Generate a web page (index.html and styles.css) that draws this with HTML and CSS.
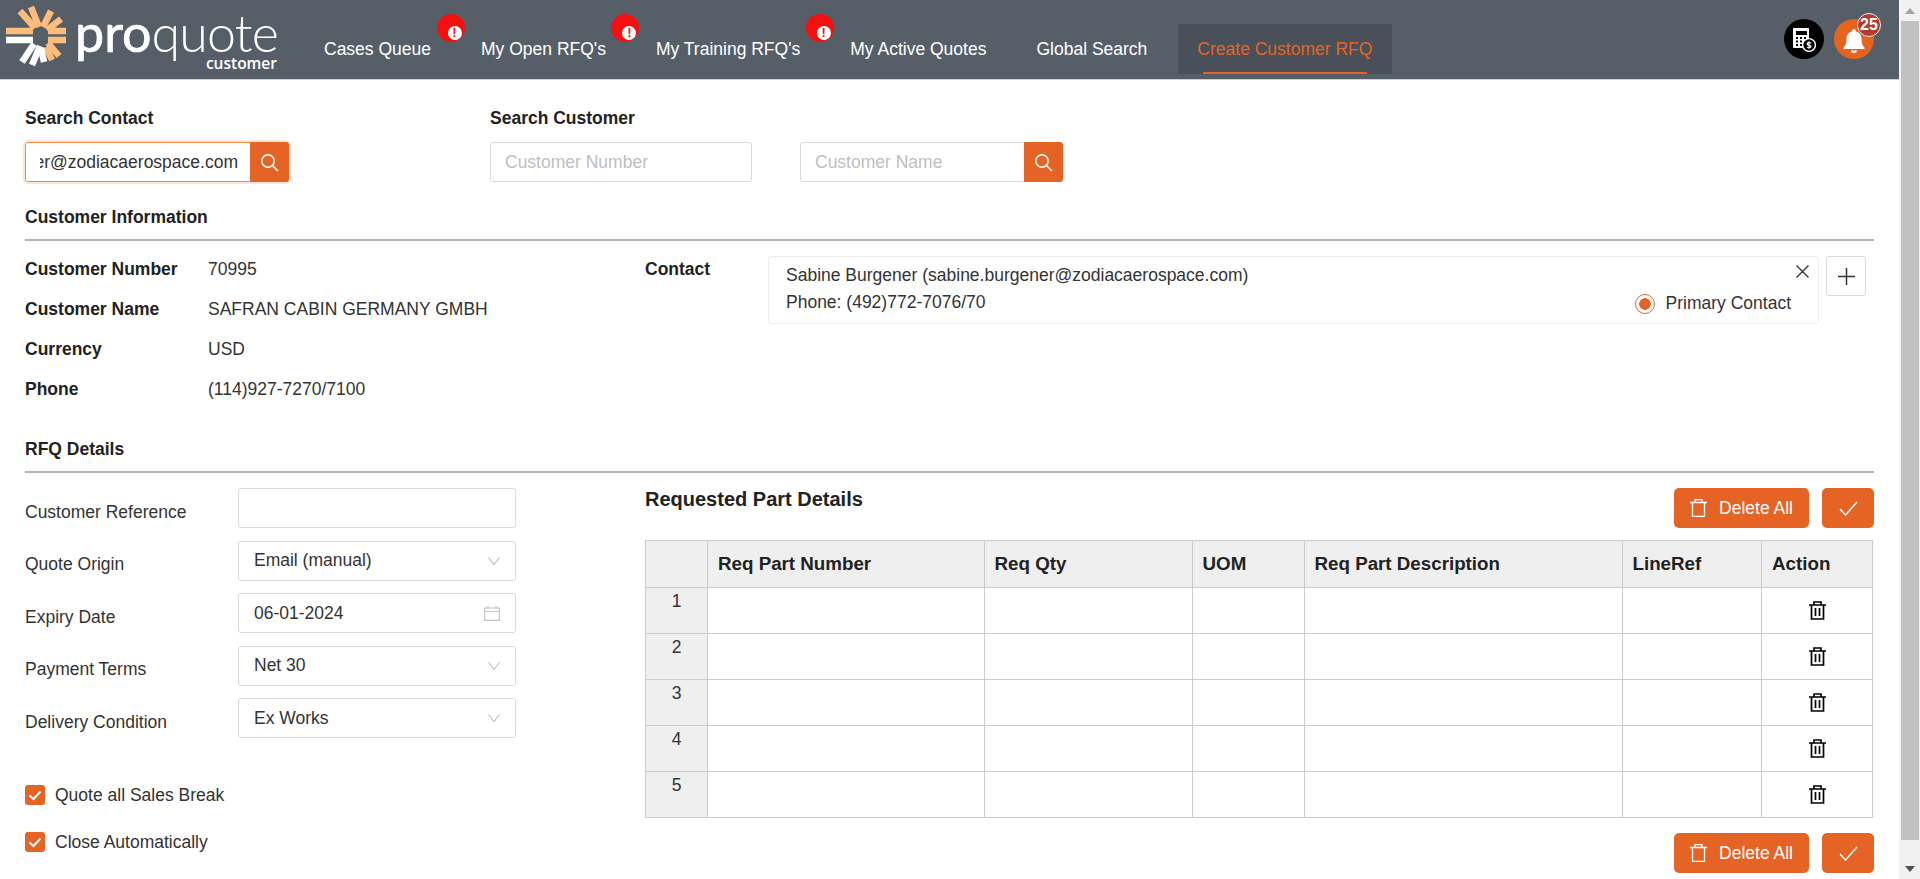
FILE: index.html
```html
<!DOCTYPE html>
<html lang="en">
<head>
    <meta charset="UTF-8">
    <title>Create Customer RFQ</title>
    <link rel="stylesheet" href="styles.css">
</head>
<body>
<div class="app">
    <div class="page">
        <header class="topbar">
            <div class="logo">
                <svg class="logo-mark" width="72" height="72" viewBox="0 0 72 72" fill="none" stroke-width="6.5">
                    <g stroke="#ffbd7c">
                        <path d="M6 31H33"/>
                        <path d="M48 31H66"/>
                        <path d="M48 40H66"/>
                        <path d="M20 11L35 28"/>
                        <path d="M31 7L39 27"/>
                        <path d="M51 11L43 27"/>
                        <path d="M61 19L47 30"/>
                        <path d="M59 56L48 43"/>
                        <path d="M52 60L46 47"/>
                    </g>
                    <g stroke="#ffffff">
                        <path d="M6 40H33"/>
                        <path d="M22 62L34 44"/>
                        <path d="M32 65L40 46"/>
                        <path d="M44 62L41 48"/>
                    </g>
                </svg>
                <div class="logo-text">
                    <div class="logo-word"><span class="logo-pro">pro</span><span class="logo-quote">quote</span></div>
                    <div class="logo-sub">customer</div>
                </div>
            </div>
            <nav class="nav">
                <a class="nav-item">Cases Queue<span class="alert"><span class="alert-dot">!</span></span></a>
                <a class="nav-item">My Open RFQ's<span class="alert"><span class="alert-dot">!</span></span></a>
                <a class="nav-item">My Training RFQ's<span class="alert"><span class="alert-dot">!</span></span></a>
                <a class="nav-item">My Active Quotes</a>
                <a class="nav-item">Global Search</a>
                <a class="nav-item active">Create Customer RFQ</a>
            </nav>
            <div class="top-icons">
                <div class="round-btn calc">
                    <svg width="24" height="24" viewBox="0 0 24 24">
                        <path fill="#fff" d="M2 0H16a1 1 0 0 1 1 1V20H2a1 1 0 0 1-1-1V1a1 1 0 0 1 1-1Z"/>
                        <rect x="4" y="3" width="11" height="4" fill="#000"/>
                        <g fill="#000">
                            <rect x="4" y="9" width="2" height="2"/><rect x="8" y="9" width="2" height="2"/><rect x="12" y="9" width="2" height="2"/>
                            <rect x="4" y="12.5" width="2" height="2"/><rect x="8" y="12.5" width="2" height="2"/>
                            <rect x="4" y="16" width="2" height="2"/><rect x="8" y="16" width="2" height="2"/>
                        </g>
                        <circle cx="17" cy="17" r="6.4" fill="#000" stroke="#fff" stroke-width="1.4"/>
                        <path fill="none" stroke="#fff" stroke-width="1.2" d="M19 15.2c-.6-.8-3.8-1-3.9.7 0 1.800 3.900 1 3.900 2.600 0 1.600-3.200 1.500-4 .5M17 13.300V20.700"/>
                    </svg>
                </div>
                <div class="round-btn bell">
                    <svg width="22" height="24" viewBox="0 0 22 24">
                        <path fill="#fff" d="M11 0a2 2 0 0 1 2 2v.6c3.700.8 5.500 3.800 5.500 7.400 0 4.500 1 6.500 3 8.500v1.500H.5v-1.500c2-2 3-4 3-8.500 0-3.600 1.800-6.600 5.500-7.400V2a2 2 0 0 1 2-2Z"/>
                        <path fill="#fff" d="M8 21.500h6a3 2.500 0 0 1-6 0Z"/>
                    </svg>
                    <span class="count">25</span>
                </div>
            </div>
        </header>

        <main class="content">
            <div class="search-row">
                <div class="search-contact">
                    <div class="field-title">Search Contact</div>
                    <div class="input-group focused">
                        <div class="scrolled-value"><span>sabine.burgener@zodiacaerospace.com</span></div>
                        <button class="search-btn">
                            <svg width="19" height="19" viewBox="0 0 19 19" fill="none" stroke="#fff" stroke-width="1.500"><circle cx="8" cy="8" r="6.200"/><path d="M12.500 12.500L18 18"/></svg>
                        </button>
                    </div>
                </div>
                <div class="search-customer">
                    <div class="field-title">Search Customer</div>
                    <div class="search-customer-inputs">
                        <input class="text-input number-input" type="text" placeholder="Customer Number">
                        <div class="input-group name-group">
                            <input class="bare-input" type="text" placeholder="Customer Name">
                            <button class="search-btn">
                                <svg width="19" height="19" viewBox="0 0 19 19" fill="none" stroke="#fff" stroke-width="1.500"><circle cx="8" cy="8" r="6.200"/><path d="M12.500 12.500L18 18"/></svg>
                            </button>
                        </div>
                    </div>
                </div>
            </div>

            <h2 class="section-title first">Customer Information</h2>
            <div class="info">
                <div class="info-list">
                    <div class="info-row"><span class="info-label">Customer Number</span><span>70995</span></div>
                    <div class="info-row"><span class="info-label">Customer Name</span><span>SAFRAN CABIN GERMANY GMBH</span></div>
                    <div class="info-row"><span class="info-label">Currency</span><span>USD</span></div>
                    <div class="info-row"><span class="info-label">Phone</span><span>(114)927-7270/7100</span></div>
                </div>
                <div class="contact">
                    <div class="contact-label">Contact</div>
                    <div class="contact-card">
                        <svg class="contact-close" width="13" height="13" viewBox="0 0 13 13" stroke="#333" stroke-width="1.300"><path d="M.5.5L12.500 12.500M12.500.5L.5 12.500"/></svg>
                        <div class="contact-line">Sabine Burgener (sabine.burgener@zodiacaerospace.com)</div>
                        <div class="contact-line contact-phone">
                            <span>Phone: (492)772-7076/70</span>
                            <span class="primary"><span class="radio"></span>Primary Contact</span>
                        </div>
                    </div>
                    <button class="add-btn">
                        <svg width="17" height="17" viewBox="0 0 17 17" stroke="#333" stroke-width="1.500"><path d="M8.500 0V17M0 8.500H17"/></svg>
                    </button>
                </div>
            </div>

            <h2 class="section-title">RFQ Details</h2>
            <div class="rfq">
                <div class="rfq-left">
                    <div class="form">
                        <div class="form-label">Customer Reference</div>
                        <input class="text-input" type="text">
                        <div class="form-label">Quote Origin</div>
                        <div class="select">Email (manual)<svg width="12" height="8" viewBox="0 0 12 8" fill="none" stroke="#bfbfbf" stroke-width="1.200"><path d="M.5 .5L6 7.500L11.500 .5"/></svg></div>
                        <div class="form-label">Expiry Date</div>
                        <div class="select">06-01-2024<svg class="cal" width="16" height="15" viewBox="0 0 16 15" fill="none" stroke="#c4c4c4" stroke-width="1.200"><path d="M.6 2H15.400V14.400H.6ZM.6 5.500H15.400M4 0V3M12 0V3"/></svg></div>
                        <div class="form-label">Payment Terms</div>
                        <div class="select">Net 30<svg width="12" height="8" viewBox="0 0 12 8" fill="none" stroke="#bfbfbf" stroke-width="1.200"><path d="M.5 .5L6 7.500L11.500 .5"/></svg></div>
                        <div class="form-label">Delivery Condition</div>
                        <div class="select">Ex Works<svg width="12" height="8" viewBox="0 0 12 8" fill="none" stroke="#bfbfbf" stroke-width="1.200"><path d="M.5 .5L6 7.500L11.500 .5"/></svg></div>
                    </div>
                    <div class="checks">
                        <div class="check-row"><span class="checkbox"><svg width="14" height="11" viewBox="0 0 14 11" fill="none" stroke="#fff" stroke-width="2"><path d="M1.500 5.500L5.500 9L12.500 1.500"/></svg></span>Quote all Sales Break</div>
                        <div class="check-row"><span class="checkbox"><svg width="14" height="11" viewBox="0 0 14 11" fill="none" stroke="#fff" stroke-width="2"><path d="M1.500 5.500L5.500 9L12.500 1.500"/></svg></span>Close Automatically</div>
                    </div>
                </div>
                <div class="rfq-right">
                    <div class="parts-head">
                        <h3 class="parts-title">Requested Part Details</h3>
                        <div class="actions">
                            <button class="btn btn-delete">
                                <svg width="17" height="18" viewBox="0 0 17 18" fill="none" stroke="#fff" stroke-width="1.300"><path d="M0 3.500H17M5 3.500V.7H12V3.500M2.500 3.500V17.300H14.500V3.500"/></svg>
                                Delete All
                            </button>
                            <button class="btn btn-check">
                                <svg width="19" height="15" viewBox="0 0 19 15" fill="none" stroke="#fff" stroke-width="1.500"><path d="M1 8L6.500 14L18 1"/></svg>
                            </button>
                        </div>
                    </div>
                    <table class="parts">
                        <colgroup>
                            <col class="c-index"><col class="c-number"><col class="c-qty"><col class="c-uom"><col class="c-desc"><col class="c-ref"><col class="c-action">
                        </colgroup>
                        <thead>
                            <tr><th></th><th>Req Part Number</th><th>Req Qty</th><th>UOM</th><th>Req Part Description</th><th>LineRef</th><th>Action</th></tr>
                        </thead>
                        <tbody>
                            <tr><td class="idx">1</td><td></td><td></td><td></td><td></td><td></td><td class="act"><svg class="trash" width="17" height="19" viewBox="0 0 17 19" fill="none" stroke="#000" stroke-width="1.700"><path d="M0 4H17M5 4V1H12V4M2.500 4V18H14.500V4M6.500 7V15M10.500 7V15"/></svg></td></tr>
                            <tr><td class="idx">2</td><td></td><td></td><td></td><td></td><td></td><td class="act"><svg class="trash" width="17" height="19" viewBox="0 0 17 19" fill="none" stroke="#000" stroke-width="1.700"><path d="M0 4H17M5 4V1H12V4M2.500 4V18H14.500V4M6.500 7V15M10.500 7V15"/></svg></td></tr>
                            <tr><td class="idx">3</td><td></td><td></td><td></td><td></td><td></td><td class="act"><svg class="trash" width="17" height="19" viewBox="0 0 17 19" fill="none" stroke="#000" stroke-width="1.700"><path d="M0 4H17M5 4V1H12V4M2.500 4V18H14.500V4M6.500 7V15M10.500 7V15"/></svg></td></tr>
                            <tr><td class="idx">4</td><td></td><td></td><td></td><td></td><td></td><td class="act"><svg class="trash" width="17" height="19" viewBox="0 0 17 19" fill="none" stroke="#000" stroke-width="1.700"><path d="M0 4H17M5 4V1H12V4M2.500 4V18H14.500V4M6.500 7V15M10.500 7V15"/></svg></td></tr>
                            <tr><td class="idx">5</td><td></td><td></td><td></td><td></td><td></td><td class="act"><svg class="trash" width="17" height="19" viewBox="0 0 17 19" fill="none" stroke="#000" stroke-width="1.700"><path d="M0 4H17M5 4V1H12V4M2.500 4V18H14.500V4M6.500 7V15M10.500 7V15"/></svg></td></tr>
                        </tbody>
                    </table>
                    <div class="actions bottom-actions">
                        <button class="btn btn-delete">
                            <svg width="17" height="18" viewBox="0 0 17 18" fill="none" stroke="#fff" stroke-width="1.300"><path d="M0 3.500H17M5 3.500V.7H12V3.500M2.500 3.500V17.300H14.500V3.500"/></svg>
                            Delete All
                        </button>
                        <button class="btn btn-check">
                            <svg width="19" height="15" viewBox="0 0 19 15" fill="none" stroke="#fff" stroke-width="1.500"><path d="M1 8L6.500 14L18 1"/></svg>
                        </button>
                    </div>
                </div>
            </div>
        </main>
    </div>

    <div class="scrollbar">
        <div class="scroll-arrow"><span class="arrow-up"></span></div>
        <div class="scroll-track"><div class="scroll-thumb"></div></div>
        <div class="scroll-arrow"><span class="arrow-down"></span></div>
    </div>
</div>
</body>
</html>
```

FILE: styles.css
```css
* {
    margin: 0;
    padding: 0;
    box-sizing: border-box;
}

body {
    font-family: "Liberation Sans", Arial, sans-serif;
    font-size: 17.5px;
    color: #333;
    background: #fff;
    overflow: hidden;
}

button {
    font-family: inherit;
    border: none;
    cursor: pointer;
}

.app {
    display: flex;
    height: 879px;
}

.page {
    flex: 1;
    min-width: 0;
    overflow: hidden;
}

/* header */
.topbar {
    height: 80px;
    display: flex;
    background: #565f68;
    border-bottom: 1px solid #ccd0d3;
}

.logo {
    width: 304.5px;
    display: flex;
    flex: none;
}

.logo-text {
    margin-left: 3px;
    padding-top: 1px;
    width: 202px;
    color: #fff;
}

.logo-word {
    font-family: Lato, sans-serif;
    font-size: 52px;
    white-space: nowrap;
}

.logo-pro {
    font-weight: 400;
    -webkit-text-stroke: 0.7px #fff;
}

.logo-quote {
    font-weight: 300;
    letter-spacing: -0.8px;
}

.logo-sub {
    font-family: "Open Sans", sans-serif;
    font-size: 15.5px;
    line-height: 16px;
    font-weight: 600;
    text-align: right;
    margin-top: -8px;
}

.nav {
    display: flex;
    gap: 11px;
    margin-top: 24px;
    height: 50px;
}

.nav-item {
    position: relative;
    display: flex;
    align-items: center;
    padding: 0 19.5px;
    color: #fff;
    white-space: nowrap;
}

.nav-item.active {
    background: #495059;
    color: #e56425;
}

.nav-item.active::after {
    content: "";
    position: absolute;
    left: 25px;
    right: 25px;
    bottom: 0;
    height: 2px;
    background: #e56425;
}

.alert {
    position: absolute;
    top: -10px;
    right: -14px;
    width: 28px;
    height: 28px;
    border-radius: 50%;
    background: #f40f10;
}

.alert-dot {
    position: absolute;
    right: 3px;
    bottom: 2px;
    width: 14px;
    height: 14px;
    border-radius: 50%;
    background: #fff;
    color: #f40f10;
    font-size: 13px;
    font-weight: 700;
    line-height: 14px;
    text-align: center;
}

.top-icons {
    margin-left: auto;
    margin-right: 25px;
    margin-top: 19px;
    display: flex;
    gap: 10px;
}

.round-btn {
    position: relative;
    width: 40px;
    height: 40px;
    border-radius: 50%;
    display: flex;
    align-items: center;
    justify-content: center;
}

.calc {
    background: #000;
    padding-top: 1px;
}

.bell {
    background: #e56420;
    padding-top: 4px;
}

.count {
    position: absolute;
    top: -6px;
    right: -7px;
    width: 24px;
    height: 24px;
    border-radius: 50%;
    background: #b23a2e;
    border: 1px solid #eee;
    color: #fff;
    font-size: 16px;
    font-weight: 700;
    line-height: 22px;
    text-align: center;
}

/* content */
.content {
    padding: 26px 25px 0;
}

.search-row {
    display: flex;
    gap: 201px;
}

.field-title {
    font-weight: 700;
    line-height: 24px;
    margin-bottom: 12px;
    color: #222;
}

.input-group {
    display: flex;
    height: 40px;
    border: 1px solid #d9d9d9;
    border-radius: 3px;
}

.focused {
    width: 264px;
    border-color: #f09050;
    box-shadow: 0 0 0 2px rgba(229, 100, 37, 0.18);
}

.scrolled-value {
    flex: 1;
    min-width: 0;
    margin: 0 12px 0 14px;
    display: flex;
    justify-content: flex-end;
    align-items: center;
    overflow: hidden;
    white-space: nowrap;
}

.search-btn {
    flex: none;
    width: 39px;
    margin: -1px -1px -1px 0;
    background: #e56425;
    border-radius: 0 3px 3px 0;
    display: flex;
    align-items: center;
    justify-content: center;
}

.search-customer-inputs {
    display: flex;
    gap: 48.5px;
}

.text-input,
.select {
    height: 40px;
    width: 100%;
    border: 1px solid #d9d9d9;
    border-radius: 3px;
    font-family: inherit;
    font-size: 17.5px;
    color: #333;
    padding: 0 15px;
    outline: none;
}

.number-input {
    width: 261.5px;
    padding: 0 14px;
}

.name-group {
    width: 263px;
}

.bare-input {
    flex: 1;
    min-width: 0;
    border: none;
    outline: none;
    background: none;
    font-family: inherit;
    font-size: 17.5px;
    padding: 0 14px;
}

input::placeholder {
    color: #bfbfbf;
}

.section-title {
    font-size: 17.5px;
    font-weight: 700;
    line-height: 24px;
    padding-bottom: 10px;
    border-bottom: 2px solid #b0b5b4;
    margin-top: 28px;
    color: #222;
}

.section-title.first {
    margin-top: 23px;
}

.info {
    display: flex;
    height: 168px;
}

.info-list {
    width: 620px;
    flex: none;
    padding-top: 8px;
}

.info-row {
    display: flex;
    align-items: center;
    height: 40px;
}

.info-label {
    width: 183px;
    font-weight: 700;
    color: #222;
}

.contact {
    flex: 1;
    display: flex;
    align-items: flex-start;
    padding-top: 15px;
}

.contact-label {
    width: 123px;
    font-weight: 700;
    color: #222;
    line-height: 26px;
}

.contact-card {
    position: relative;
    width: 1051px;
    height: 68px;
    border: 1px solid #eee;
    border-radius: 3px;
    padding: 5px 27px 0 17px;
}

.contact-close {
    position: absolute;
    top: 8px;
    right: 9px;
}

.contact-line {
    line-height: 27px;
}

.contact-phone {
    display: flex;
    justify-content: space-between;
}

.primary {
    display: flex;
    align-items: center;
    gap: 11px;
    margin-top: 1px;
}

.radio {
    width: 20px;
    height: 20px;
    border-radius: 50%;
    border: 1px solid #e56425;
    background: radial-gradient(circle, #e56425 0 5.5px, #fff 6px);
}

.add-btn {
    width: 40px;
    height: 40px;
    margin-left: 7px;
    background: #fff;
    border: 1px solid #d9d9d9;
    border-radius: 3px;
    display: flex;
    align-items: center;
    justify-content: center;
}

.rfq {
    display: flex;
    margin-top: 15px;
}

.rfq-left {
    width: 620px;
    flex: none;
}

.form {
    width: 491px;
    display: grid;
    grid-template-columns: 213px 1fr;
    grid-auto-rows: 40px;
    row-gap: 12.5px;
}

.form-label {
    display: flex;
    align-items: center;
    padding-top: 8px;
}

.select {
    display: flex;
    align-items: center;
    justify-content: space-between;
}

.checks {
    margin-top: 47px;
    display: flex;
    flex-direction: column;
    gap: 27px;
}

.check-row {
    display: flex;
    align-items: center;
    gap: 10px;
    height: 20px;
}

.checkbox {
    width: 20px;
    height: 20px;
    background: #e56425;
    border-radius: 3px;
    display: flex;
    align-items: center;
    justify-content: center;
}

.rfq-right {
    flex: 1;
    min-width: 0;
}

.parts-head {
    display: flex;
    justify-content: space-between;
    align-items: flex-start;
    margin-bottom: 12px;
}

.parts-title {
    font-size: 20px;
    font-weight: 700;
    line-height: 24px;
    color: #222;
    margin-top: -1px;
}

.actions {
    display: flex;
    gap: 13px;
}

.bottom-actions {
    justify-content: flex-end;
    margin-top: 15px;
}

.btn {
    height: 40px;
    background: #e56425;
    color: #fff;
    font-size: 17.5px;
    border-radius: 5px;
    display: flex;
    align-items: center;
    justify-content: center;
}

.btn-delete {
    width: 135px;
    gap: 12px;
}

.btn-check {
    width: 52px;
}

.parts {
    width: 1227px;
    table-layout: fixed;
    border-collapse: collapse;
}

.c-index { width: 62px; }
.c-number { width: 276.5px; }
.c-qty { width: 208px; }
.c-uom { width: 112px; }
.c-desc { width: 318px; }
.c-ref { width: 139.5px; }
.c-action { width: 111px; }

.parts th,
.parts td {
    border: 1px solid #ccc;
}

.parts th {
    height: 47px;
    background: #efefef;
    text-align: left;
    padding: 0 10px;
    font-size: 18.75px;
    color: #222;
}

.parts td {
    height: 46px;
}

.parts .idx {
    background: #efefef;
    text-align: center;
    vertical-align: top;
    padding-top: 3px;
}

.parts .act {
    text-align: center;
    padding-left: 0;
}

.trash {
    display: block;
    margin: 0 auto;
}

/* window scrollbar */
.scrollbar {
    width: 21px;
    flex: none;
    background: #f1f1f1;
    display: flex;
    flex-direction: column;
    border-left: 1px solid #f7f7f7;
}

.scroll-arrow {
    height: 21px;
    display: flex;
    align-items: center;
    justify-content: center;
}

.arrow-up,
.arrow-down {
    width: 0;
    height: 0;
    border-left: 5px solid transparent;
    border-right: 5px solid transparent;
}

.arrow-up {
    border-bottom: 6px solid #a3a3a3;
}

.arrow-down {
    border-top: 6px solid #505050;
}

.scroll-track {
    flex: 1;
    padding: 0 1px;
}

.scroll-thumb {
    height: 819px;
    background: #c1c1c1;
}
```
